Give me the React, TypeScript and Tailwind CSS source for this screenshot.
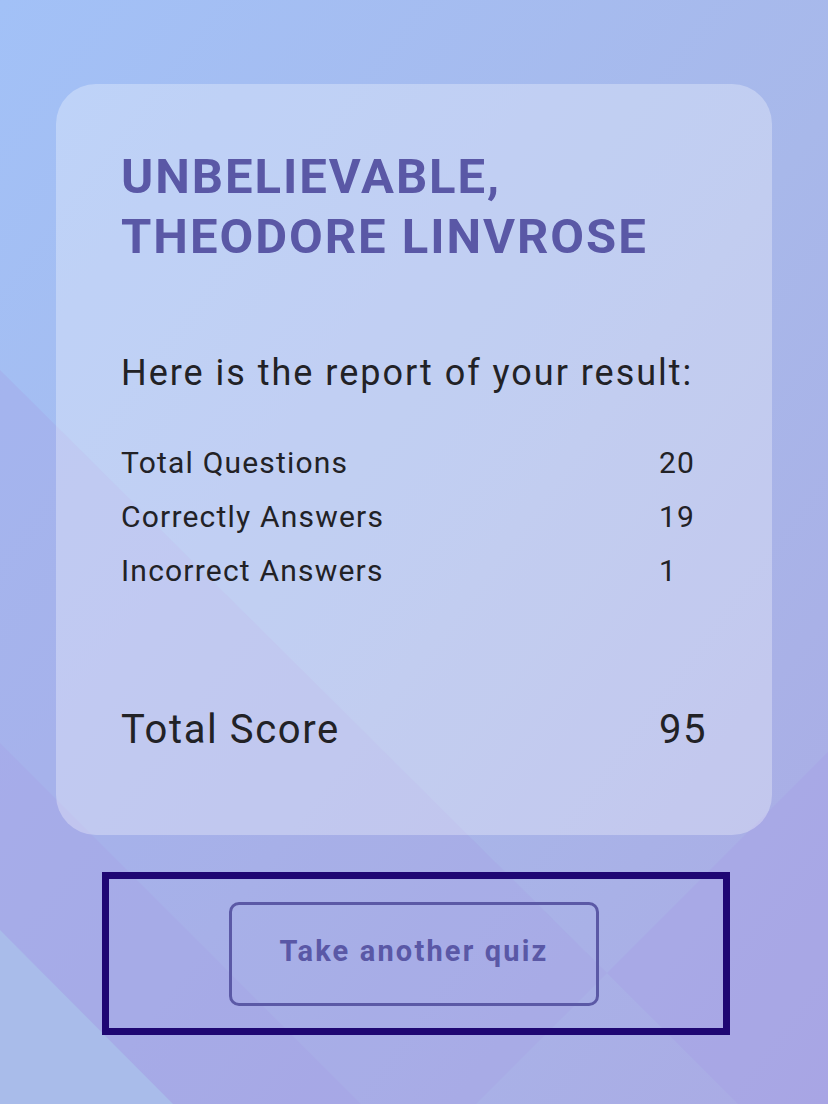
const stats = [
  { label: "Total Questions", value: "20" },
  { label: "Correctly Answers", value: "19" },
  { label: "Incorrect Answers", value: "1" },
];

function Backdrop() {
  return (
    <svg className="absolute inset-0 w-full h-full pointer-events-none" viewBox="0 0 828 1104" preserveAspectRatio="none">
      <defs>
        <linearGradient id="bg" x1="0" y1="0" x2="1" y2="1">
          <stop offset="0" stopColor="#a2c1f7" />
          <stop offset="0.55" stopColor="#a8b8ea" />
          <stop offset="1" stopColor="#aaaae4" />
        </linearGradient>
      </defs>
      <rect width="828" height="1104" fill="url(#bg)" />
      <polygon points="0,370 607,973 476,1104 0,1104" fill="#a69fe6" opacity="0.3" />
      <polygon points="828,752 607,973 738,1104 828,1104" fill="#a69fe6" opacity="0.35" />
      <polygon points="0,743 361,1104 0,1104" fill="#a69fe6" opacity="0.3" />
      <polygon points="0,930 173,1104 0,1104" fill="#a9bdea" opacity="0.95" />
    </svg>
  );
}

export default function App() {
  return (
    <div className="relative w-full min-h-screen overflow-hidden" style={{ fontFamily: "Roboto, 'Noto Sans', sans-serif" }}>
      <Backdrop />
      <div className="relative z-10 px-[56px] pt-[84px]">
        <div className="h-[751px] rounded-[40px] bg-white/30 px-[65px] pt-[63px]">
          <h1 className="text-[49px] leading-[60px] font-bold uppercase tracking-[0.04em] text-[#5a58a6]">
            Unbelievable,
            <br />
            Theodore Linvrose
          </h1>
          <p className="mt-[84px] text-[36px] leading-[44px] tracking-[0.055em] text-[#222226]">Here is the report of your result:</p>
          <div className="mt-[48px] flex flex-col gap-[14px]">
            {stats.map((s) => (
              <div key={s.label} className="grid grid-cols-[538px_1fr] text-[30px] leading-[40px] tracking-[0.04em] text-[#222226]">
                <span>{s.label}</span>
                <span>{s.value}</span>
              </div>
            ))}
          </div>
          <div className="mt-[115px] grid grid-cols-[538px_1fr] text-[40px] leading-[48px] tracking-[0.04em] text-[#222226]">
            <span>Total Score</span>
            <span>95</span>
          </div>
        </div>
        <div className="mt-[37px] ml-[46px] w-[628px] h-[163px] border-[7px] border-[#1f0773] flex items-center pl-[120px]">
          <button className="w-[370px] h-[104px] rounded-[10px] border-[3px] border-[#5b59a6] text-[29px] font-bold tracking-[0.075em] text-[#5a58a6]">
            <span className="relative -top-[2px]">Take another quiz</span>
          </button>
        </div>
      </div>
    </div>
  );
}
